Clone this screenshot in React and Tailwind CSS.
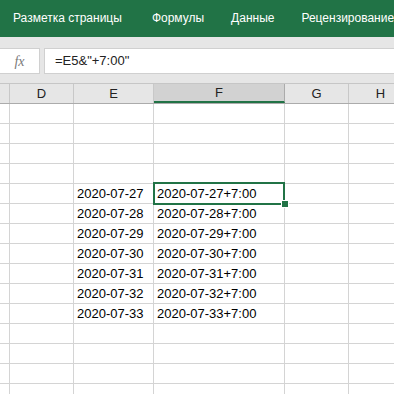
import React from 'react'

const cols = [
  { key: 'row', w: 'w-[10px]', label: '' },
  { key: 'D', w: 'w-[64px]', label: 'D' },
  { key: 'E', w: 'w-[80px]', label: 'E' },
  { key: 'F', w: 'w-[131px]', label: 'F' },
  { key: 'G', w: 'w-[64px]', label: 'G' },
  { key: 'H', w: 'w-[64px]', label: 'H' },
]

const dates = ['27', '28', '29', '30', '31', '32', '33']

const rows = Array.from({ length: 15 }, (_, i) => {
  const d = i >= 4 && i < 11 ? dates[i - 4] : null
  return {
    E: d ? `2020-07-${d}` : '',
    F: d ? `2020-07-${d}+7:00` : '',
    selected: i === 4,
  }
})

export default function App() {
  return (
    <div className="w-[394px] h-[394px] overflow-hidden bg-white font-['Liberation_Sans',Arial,sans-serif]">
      {/* ribbon tabs */}
      <div className="h-[37px] bg-[#217346] flex items-center pl-[13px] text-white text-[12px] whitespace-nowrap pb-[1px] overflow-hidden">
        <span>Разметка страницы</span>
        <span className="ml-[30px]">Формулы</span>
        <span className="ml-[27px]">Данные</span>
        <span className="ml-[27px]">Рецензирование</span>
      </div>

      {/* formula bar */}
      <div className="h-[47px] bg-[#e6e6e6] pt-[11px] pb-[10px] flex gap-[4px] border-b border-[#c6c6c6]">
        <div className="w-[40px] h-[26px] bg-white border border-[#d0d0d0] border-l-0 flex items-center justify-center text-[#7a7a7a] italic text-[14px] font-['Liberation_Serif',serif]">
          fx
        </div>
        <div className="flex-1 h-[26px] bg-white border border-[#d0d0d0] border-r-0 flex items-center pl-[10px] text-[13px] text-[#222]">
          =E5&amp;"+7:00"
        </div>
      </div>

      {/* column headers */}
      <div className="flex h-[20px] bg-[#e6e6e6] border-b border-[#ababab] text-[13px] text-[#222]">
        {cols.map((c) => (
          <div
            key={c.key}
            className={`${c.w} shrink-0 flex items-center justify-center border-r ${
              c.key === 'F' ? 'bg-[#d2d2d2] border-b-2 border-b-[#217346] border-r-[#ababab]' : 'border-[#c8c8c8]'
            }`}
          >
            {c.label}
          </div>
        ))}
      </div>

      {/* grid */}
      <div className="text-[13px] text-black">
        {rows.map((r, i) => (
          <div key={i} className="flex h-[20px]">
            {cols.map((c) => (
              <div
                key={c.key}
                className={`${c.w} shrink-0 relative border-r border-b border-[#d4d4d4] flex items-center pl-[3px] whitespace-nowrap`}
              >
                {c.key === 'E' && r.E}
                {c.key === 'F' && r.F}
                {c.key === 'F' && r.selected && (
                  <>
                    <div className="absolute -left-[1px] -top-[2px] right-[-1px] bottom-[-2px] border-2 border-[#217346] z-10" />
                    <div className="absolute right-[-5px] bottom-[-5px] w-[8px] h-[8px] bg-[#217346] border border-white z-20" />
                  </>
                )}
              </div>
            ))}
          </div>
        ))}
      </div>
    </div>
  )
}
